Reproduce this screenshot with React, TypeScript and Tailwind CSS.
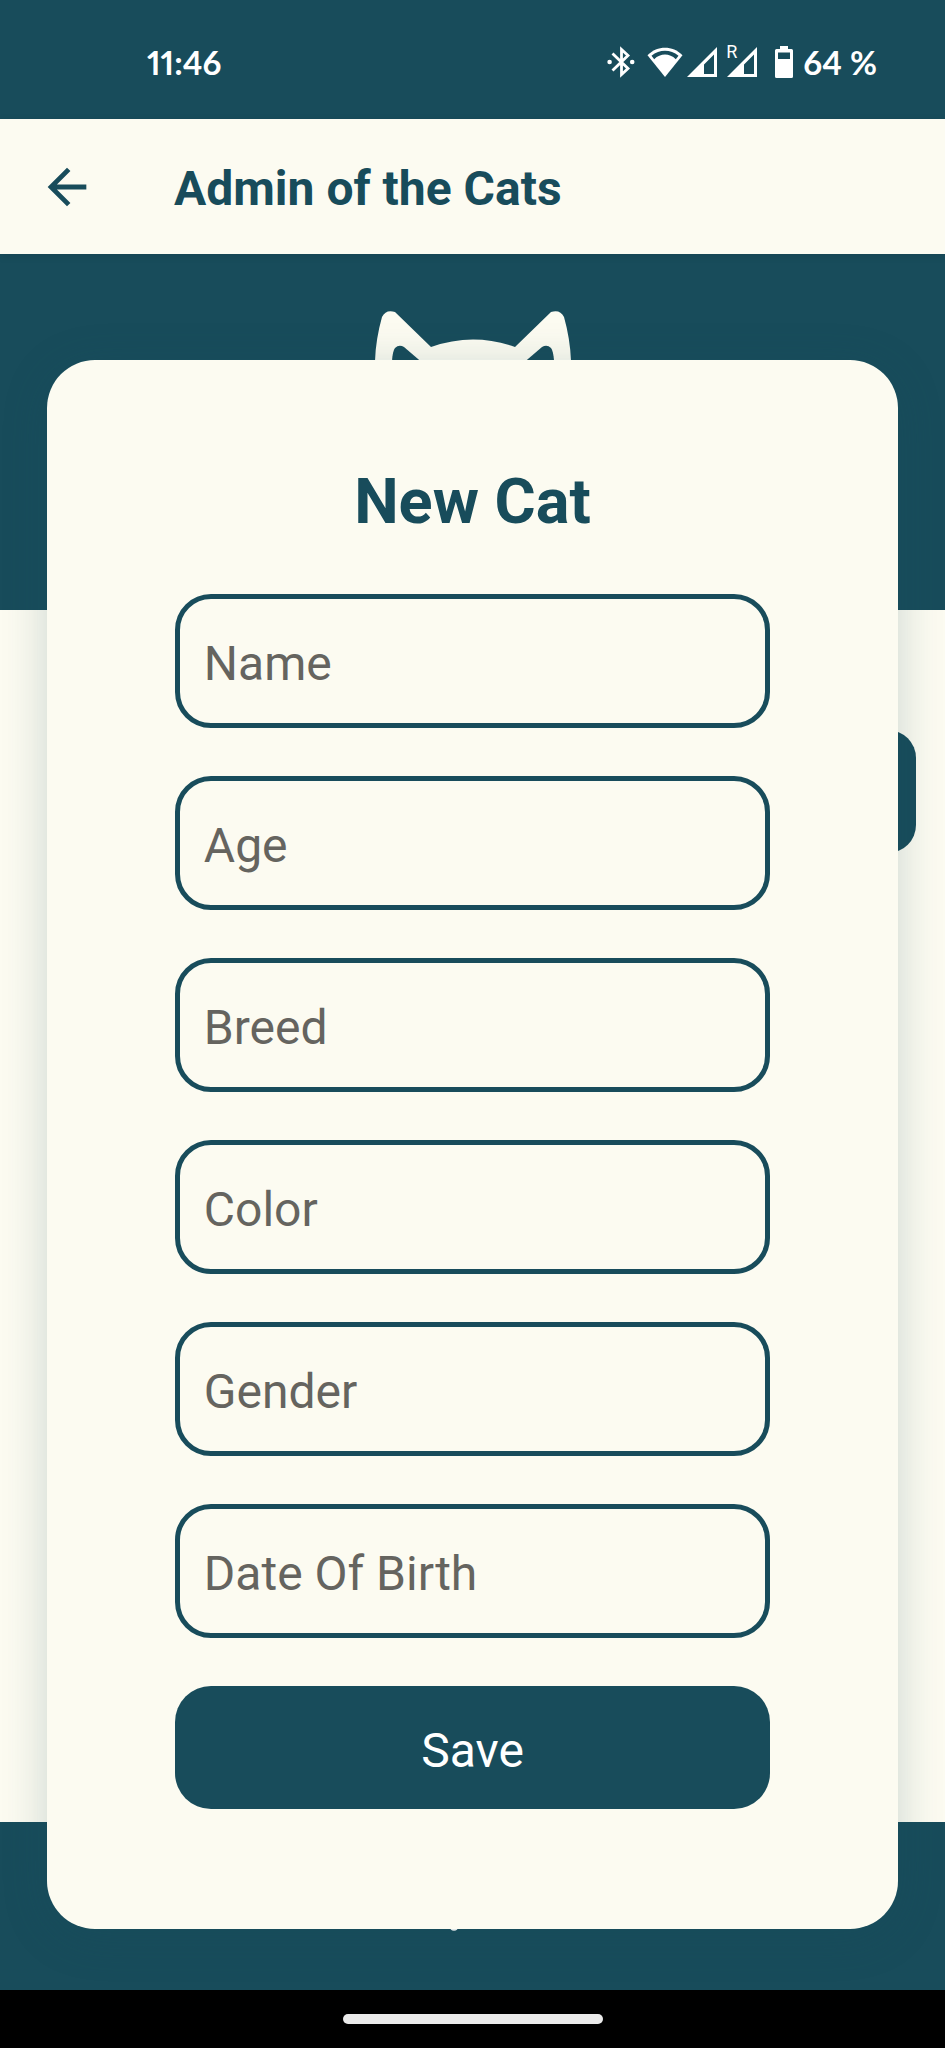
import { useState } from "react";

type Field = { id: string; label: string };

const fields: Field[] = [
  { id: "name", label: "Name" },
  { id: "age", label: "Age" },
  { id: "breed", label: "Breed" },
  { id: "color", label: "Color" },
  { id: "gender", label: "Gender" },
  { id: "birth", label: "Date Of Birth" },
];

function BluetoothIcon() {
  return (
    <svg className="h-8 w-7" viewBox="0 0 28 32" fill="none" aria-hidden="true">
      <path
        d="M5.5 7.5 21 22.5 14.5 28.5V3.5L21 9.5 5.5 24.5"
        stroke="white"
        strokeWidth="2.8"
      />
      <circle cx="2.6" cy="16" r="2.3" fill="white" />
      <circle cx="25.2" cy="16" r="2.3" fill="white" />
    </svg>
  );
}

function WifiIcon() {
  return (
    <svg className="ml-3 h-8 w-9" viewBox="0 0 36 32" fill="none" aria-hidden="true">
      <path d="M.5 9.200C10.500-.6 25.500-.6 35.500 9.200L18 31Z" fill="white" />
      <path d="M4.500 9.800C12.500 3 23.500 3 31.500 9.800L28.800 13.200C22.500 7 13.500 7 7.200 13.200Z" fill="#184c5b" />
    </svg>
  );
}

function SignalIcon() {
  return (
    <svg className="h-8 w-8" viewBox="0 0 32 32" aria-hidden="true">
      <path d="M1 31 31 1V31ZM18 28H28V8.5L18 18.5Z" fill="white" fillRule="evenodd" />
    </svg>
  );
}

function BatteryIcon() {
  return (
    <svg className="ml-4 h-8 w-5" viewBox="0 0 20 32" aria-hidden="true">
      <path
        d="M6 0H14V3H17.5Q19 3 19 4.500V30.500Q19 32 17.500 32H2.500Q1 32 1 30.500V4.500Q1 3 2.500 3H6ZM4 6.500V13H16V6.500Z"
        fill="white"
        fillRule="evenodd"
      />
    </svg>
  );
}

function StatusBar() {
  return (
    <div className="flex h-[119px] items-center justify-between bg-[#184c5b] pt-1 pr-[68px] pl-[147px] font-['Lato',sans-serif] text-[33px] leading-10 font-bold text-white proportional-nums">
      <span>11:46</span>
      <div className="flex items-center">
        <BluetoothIcon />
        <WifiIcon />
        <div className="ml-[3px]">
          <SignalIcon />
        </div>
        <div className="relative ml-2">
          <SignalIcon />
          <span className="absolute -top-1 left-0 font-['Roboto',sans-serif] text-lg leading-5 font-normal">
            R
          </span>
        </div>
        <BatteryIcon />
        <span className="ml-[9px]">64 %</span>
      </div>
    </div>
  );
}

function CatLogo() {
  return (
    <svg className="h-[200px] w-[200px]" viewBox="0 0 200 200" aria-hidden="true">
      <path
        d="M2 50C2.500 35 5 20 9 6Q13-2 22 1L58 36Q100 21 142 36L178 1Q187-2 191 6C195 20 197.500 35 198 50V120C190 220 10 220 2 120Z"
        fill="#fcfbf1"
      />
      <path d="M19 52C19 46 20 40 22 37Q26 33 31 36L52 54Z" fill="#184c5b" />
      <path d="M181 52C181 46 180 40 178 37Q174 33 169 36L148 54Z" fill="#184c5b" />
    </svg>
  );
}

export default function App() {
  const [values, setValues] = useState<Record<string, string>>({});

  return (
    <div className="flex min-h-screen flex-col bg-[#fcfbf1] font-['Roboto',sans-serif] text-[#184c5b]">
      <StatusBar />

      <header className="relative z-10 flex h-[135px] items-center bg-[#fcfbf1] pl-[38px] shadow-[0_2px_8px_rgba(0,0,0,0.1)]">
        <button type="button" aria-label="Back" className="size-[58px]">
          <svg className="size-full" viewBox="0 0 24 24" fill="currentColor" aria-hidden="true">
            <path d="M20 11H7.830l5.590-5.590L12 4l-8 8 8 8 1.410-1.410L7.830 13H20v-2z" />
          </svg>
        </button>
        <h1 className="pt-1 pl-[78px] text-5xl leading-14 font-bold">Admin of the Cats</h1>
      </header>

      <main className="grid flex-1">
        <div className="col-start-1 row-start-1 flex flex-col">
          <div className="flex h-[356px] justify-center bg-[#184c5b] pt-[57px]">
            <CatLogo />
          </div>
          <div className="flex flex-1 justify-end px-[29px] pt-[120px]">
            <div className="h-[123px] w-[280px] rounded-[28px] bg-[#184c5b]" />
          </div>
          <footer className="flex h-[168px] justify-center bg-[#184c5b] pt-[100px]">
            <svg className="h-3 w-12" viewBox="0 0 48 12" aria-hidden="true">
              <circle cx="5" cy="4.800" r="4" fill="white" />
            </svg>
          </footer>
        </div>

        <div className="z-10 col-start-1 row-start-1 flex flex-col items-center pt-[106px] pb-[61px]">
          <section
            role="dialog"
            aria-labelledby="dialog-title"
            className="flex w-9/10 flex-col items-center rounded-[48px] bg-[#fcfbf1] pt-[102px] pb-[120px] shadow-[0_8px_45px_rgba(24,76,91,0.22)]"
          >
            <h2 id="dialog-title" className="mb-[52px] text-[63px] leading-20 font-bold">
              New Cat
            </h2>
            <form className="flex w-7/10 flex-col gap-12" onSubmit={(e) => e.preventDefault()}>
              {fields.map((field) => (
                <input
                  key={field.id}
                  id={field.id}
                  aria-label={field.label}
                  placeholder={field.label}
                  value={values[field.id] ?? ""}
                  onChange={(e) => setValues({ ...values, [field.id]: e.target.value })}
                  className="h-[134px] w-full rounded-[36px] border-5 border-[#184c5b] bg-transparent px-6 pt-1 text-5xl outline-none placeholder:text-[#65645f]"
                />
              ))}
              <button
                type="submit"
                className="h-[123px] w-full rounded-[36px] bg-[#184c5b] pt-[6px] text-5xl text-white"
              >
                Save
              </button>
            </form>
          </section>
        </div>
      </main>

      <div className="flex h-[58px] justify-center bg-black pt-6">
        <div className="h-[10px] w-[260px] rounded-full bg-[#ebebeb]" />
      </div>
    </div>
  );
}
